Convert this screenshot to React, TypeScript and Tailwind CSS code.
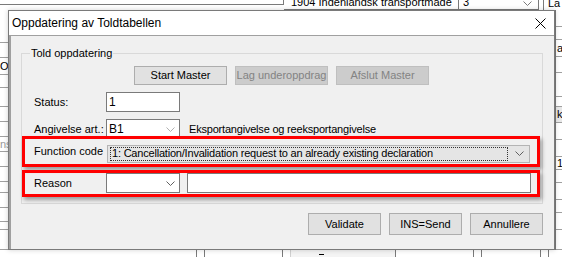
import React from "react";

const Chevron = ({ color = "#7a7a7a" }: { color?: string }) => (
  <svg width="9" height="5" viewBox="0 0 9 5">
    <path d="M0.5 0.5 L4.5 4.5 L8.5 0.5" fill="none" stroke={color} strokeWidth="1" />
  </svg>
);

const leftCells: { h: number; text?: string; gray?: boolean }[] = [
  { h: 33 }, { h: 15 }, { h: 17, text: "Ok" }, { h: 13 }, { h: 19 }, { h: 15 }, { h: 15 },
  { h: 15, text: "ns", gray: true }, { h: 15 }, { h: 15 }, { h: 11 }, { h: 15 }, { h: 14 }, { h: 8 }, { h: 20 },
];

const rightCells: { h: number; text?: string; shade?: boolean }[] = [
  { h: 17 }, { h: 13 }, { h: 17, text: "a" }, { h: 16 }, { h: 24 }, { h: 10 }, { h: 16, text: "k", shade: true },
  { h: 17 }, { h: 17 }, { h: 13, text: "1" }, { h: 13 }, { h: 17 }, { h: 13 }, { h: 17 }, { h: 20 },
];

function Background() {
  return (
    <div className="flex flex-col h-full">
      {/* top strip of the app window behind */}
      <div className="flex h-[10px] shrink-0">
        <div className="w-[284px] h-[5px] border-b border-r border-[#7a7a7a]" />
        <div className="w-[174px] h-[10px] border-b border-[#7a7a7a] flex items-end overflow-hidden pl-[7px]">
          <span className="leading-[13px] whitespace-nowrap">1904 Indenlandsk transportmåde</span>
        </div>
        <div className="w-[81px] h-[10px] border-b border-x border-[#7a7a7a] flex items-end justify-between overflow-hidden pl-[4px] pr-[6px]">
          <span className="leading-[13px]">3</span>
          <span className="pb-[3px]"><Chevron /></span>
        </div>
        <div className="w-[5px] border-r border-[#7a7a7a]" />
        <div className="flex-1 h-[10px] flex items-end overflow-hidden pl-[4px]">
          <span className="leading-[13px]">La</span>
        </div>
      </div>

      <div className="flex flex-1">
        <div className="w-[8px] flex flex-col overflow-hidden">
          {leftCells.map((c, i) => (
            <div
              key={i}
              className="border-b border-[#a0a0a0] flex items-center overflow-hidden whitespace-nowrap"
              style={{ height: c.h }}
            >
              {c.text && <span className={c.gray ? "text-[#9a9a9a]" : "text-black"}>{c.text}</span>}
            </div>
          ))}
        </div>
        <div className="flex-1" />
        <div className="w-[7px] flex flex-col border-l border-[#7a7a7a] ml-[2px] overflow-hidden">
          {rightCells.map((c, i) => (
            <div
              key={i}
              className={`border-b border-[#a0a0a0] flex items-center pl-[1px] overflow-hidden ${c.shade ? "bg-[#e8e8e8]" : ""}`}
              style={{ height: c.h }}
            >
              {c.text && <span>{c.text}</span>}
            </div>
          ))}
        </div>
      </div>

      {/* bottom strip */}
      <div className="flex h-[8px] shrink-0">
        <div className="w-[8px]" />
        <div className="w-[189px] border-r border-b border-[#7a7a7a]" />
        <div className="w-[7px]" />
        <div className="w-[79px] border-x border-b border-[#7a7a7a]" />
        <div className="w-[7px]" />
        <div className="w-[105px] bg-[#f4f4f4] border-l border-[#d0d0d0] flex items-center pl-[28px]">
          <span className="w-[5px] h-[1px] bg-black" />
        </div>
        <div className="w-[79px] border-x border-b border-[#7a7a7a]" />
        <div className="w-[7px]" />
        <div className="w-[60px] border-x border-b border-[#7a7a7a]" />
        <div className="w-[7px]" />
        <div className="flex-1 border-l border-b border-[#7a7a7a]" />
      </div>
    </div>
  );
}

function WinButton({ label, disabled, className }: { label: string; disabled?: boolean; className: string }) {
  return (
    <div
      className={`flex items-center justify-center border ${
        disabled ? "bg-[#cccccc] border-[#bfbfbf] text-[#838383]" : "bg-[#e1e1e1] border-[#adadad] text-black"
      } ${className}`}
    >
      {label}
    </div>
  );
}

function Dialog() {
  return (
    <div className="absolute left-[8px] top-[10px] w-[547px] h-[240px] border border-[#7a7a7a] bg-white flex flex-col shadow-[0_0_5px_rgba(0,0,0,0.18)]">
      {/* title bar */}
      <div className="h-[24px] shrink-0 flex items-center justify-between pl-[3px] pr-[8px] text-[12px]">
        <span>Oppdatering av Toldtabellen</span>
        <svg width="11" height="11" viewBox="0 0 11 11">
          <path d="M0.5 0.5 L10.5 10.5 M10.5 0.5 L0.5 10.5" stroke="#000" strokeWidth="1" />
        </svg>
      </div>

      <div className="flex-1 bg-[#f0f0f0] border-l-2 border-t border-[#a0a0a0] pl-[10px] pr-[11px]">
        <fieldset className="m-0 mt-[11px] p-0 pb-[6px] border border-[#d9d9d9]">
          <legend className="ml-[8px] px-[1px] leading-[13px]">Told oppdatering</legend>

          <div className="flex gap-[8px] pl-[112px] mt-[6px]">
            <WinButton label="Start Master" className="w-[93px] h-[19px]" />
            <WinButton label="Lag underoppdrag" disabled className="w-[93px] h-[19px]" />
            <WinButton label="Afslut Master" disabled className="w-[93px] h-[19px]" />
          </div>

          <div className="flex items-center mt-[7px]">
            <div className="w-[84px] pl-[12px]">Status:</div>
            <div className="w-[74px] h-[20px] bg-white border border-[#7a7a7a] flex items-center pl-[2px] text-[12px]">1</div>
          </div>

          <div className="flex items-center mt-[7px]">
            <div className="w-[84px] pl-[12px]">Angivelse art.:</div>
            <div className="w-[74px] h-[20px] bg-white border border-[#7a7a7a] flex items-center justify-between pl-[2px] pr-[4px] text-[12px]">
              <span>B1</span>
              <Chevron color="#b0b0b0" />
            </div>
            <span className="ml-[9px] tracking-[-0.2px]">Eksportangivelse og reeksportangivelse</span>
          </div>

          <div className="relative -mt-[3px] w-[518px] h-[31px] border-[3px] border-[#ff0000] shadow-[2px_3px_4px_rgba(0,0,0,0.35)] flex items-center">
            <div className="w-[82px] pl-[9px] shrink-0">Function code</div>
            <div className="w-[423px] h-[18px] mt-[4px] bg-[#e5e5e5] border border-[#b4b4b4] flex items-center pl-[2px] pr-[5px]">
              <div className="flex-1 h-[14px] border border-dotted border-[#333] flex items-center pl-[1px] whitespace-nowrap overflow-hidden tracking-[-0.2px]">
                1: Cancellation/Invalidation request to an already existing declaration
              </div>
              <span className="ml-[7px]"><Chevron color="#606060" /></span>
            </div>
          </div>

          <div className="relative mt-[3px] w-[518px] h-[27px] border-[3px] border-[#ff0000] shadow-[2px_3px_4px_rgba(0,0,0,0.35)] flex items-start">
            <div className="w-[81px] pl-[9px] h-[20px] flex items-center shrink-0">Reason</div>
            <div className="w-[74px] h-[20px] bg-white border border-[#7a7a7a] flex items-center justify-end pr-[4px]">
              <Chevron color="#606060" />
            </div>
            <div className="ml-[7px] w-[344px] h-[20px] bg-white border border-[#7a7a7a]" />
          </div>
        </fieldset>

        <div className="flex justify-end gap-[8px] mt-[9px]">
          <WinButton label="Validate" className="w-[73px] h-[22px]" />
          <WinButton label="INS=Send" className="w-[73px] h-[22px]" />
          <WinButton label="Annullere" className="w-[73px] h-[22px]" />
        </div>
      </div>
    </div>
  );
}

export default function App() {
  return (
    <div className="relative w-[562px] h-[257px] overflow-hidden bg-white text-[11px] text-black font-['Liberation_Sans',Arial,sans-serif]">
      <Background />
      <Dialog />
    </div>
  );
}
